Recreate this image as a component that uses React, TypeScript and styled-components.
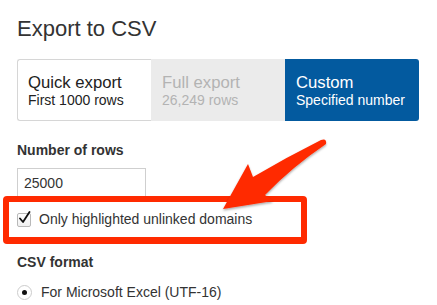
import styled, { createGlobalStyle } from 'styled-components';

const GlobalStyle = createGlobalStyle`
	body {
		margin: 0;
		background: #ffffff;
		font-family: 'Liberation Sans', Arial, sans-serif;
		color: #333333;
	}
`;

type TabVariant = 'plain' | 'disabled' | 'active';

const tabs: { title: string; sub: string; variant: TabVariant }[] = [
	{ title: 'Quick export', sub: 'First 1000 rows', variant: 'plain' },
	{ title: 'Full export', sub: '26,249 rows', variant: 'disabled' },
	{ title: 'Custom', sub: 'Specified number', variant: 'active' },
];

function App() {
	return (
		<>
			<GlobalStyle />
			<Page>
				<Title>Export to CSV</Title>
				<Tabs>
					{tabs.map((tab) => (
						<Tab key={tab.title} $variant={tab.variant}>
							<TabTitle>{tab.title}</TabTitle>
							<TabSub>{tab.sub}</TabSub>
						</Tab>
					))}
				</Tabs>

				<Label>Number of rows</Label>
				<NumberInput defaultValue='25000' />

				<Highlight>
					<CheckRow>
						<Checkbox>
							<svg width='15' height='15' viewBox='0 0 15 15'>
								<path
									d='M3 7.5 L6 11 L12.5 1'
									fill='none'
									stroke='#111'
									strokeWidth='1.8'
									strokeLinecap='round'
									strokeLinejoin='round'
								/>
							</svg>
						</Checkbox>
						Only highlighted unlinked domains
					</CheckRow>
				</Highlight>

				<Label $top={10}>CSV format</Label>
				<RadioRow>
					<Radio />
					For Microsoft Excel (UTF-16)
				</RadioRow>

				<Arrow width='437' height='305' viewBox='0 0 437 305'>
					<defs>
						<filter id='shadow' x='-20%' y='-20%' width='140%' height='140%'>
							<feDropShadow dx='0' dy='1.5' stdDeviation='1' floodColor='#000' floodOpacity='0.35' />
						</filter>
					</defs>
					<path
						d='M253 177 Q287 157 321 140 Q327 138 326 144 Q292 167 265 195 L273 201 L223 209 L248 164 Z'
						fill='#ff2a00'
						filter='url(#shadow)'
					/>
				</Arrow>
			</Page>
		</>
	);
}

const Page = styled.div`
	position: relative;
	width: 437px;
	height: 305px;
	padding: 16px 0 0 17px;
	box-sizing: border-box;
	overflow: hidden;
`;

const Title = styled.h1`
	margin: 0;
	font-size: 22px;
	line-height: 26px;
	font-weight: 400;
	color: #333;
`;

const Tabs = styled.div`
	display: flex;
	width: 402px;
	height: 62px;
	margin-top: 17px;
`;

const Tab = styled.div<{ $variant: TabVariant }>`
	flex: 1;
	box-sizing: border-box;
	background: ${(p) =>
		p.$variant === 'active' ? '#035a9f' : p.$variant === 'disabled' ? '#ebebeb' : '#ffffff'};
	color: ${(p) =>
		p.$variant === 'active' ? '#ffffff' : p.$variant === 'disabled' ? '#b3b3b3' : '#222222'};
	border: ${(p) => (p.$variant === 'plain' ? '1px solid #d6d6d6' : 'none')};
	border-right: none;
	border-radius: ${(p) =>
		p.$variant === 'plain' ? '3px 0 0 3px' : p.$variant === 'active' ? '0 3px 3px 0' : '0'};
	padding-top: ${(p) => (p.$variant === 'plain' ? '14.4px' : '15.4px')};
	padding-left: ${(p) => (p.$variant === 'plain' ? '10px' : '11px')};
`;

const TabTitle = styled.div`
	font-size: 16.7px;
	line-height: 18px;
`;

const TabSub = styled.div`
	font-size: 14px;
	line-height: 16px;
`;

const Label = styled.div<{ $top?: number }>`
	margin-top: ${(p) => (p.$top ?? 21)}px;
	font-size: 14px;
	line-height: 17px;
	font-weight: 700;
	color: #333;
`;

const NumberInput = styled.input`
	display: block;
	box-sizing: border-box;
	width: 129px;
	height: 30px;
	margin: 9px 0 0;
	padding: 0 6px;
	border: 1px solid #cfcfcf;
	border-radius: 0;
	font-family: 'Liberation Sans', Arial, sans-serif;
	font-size: 14px;
	color: #333;
	outline: none;
`;

const Highlight = styled.div`
	position: relative;
	box-sizing: border-box;
	width: 304px;
	height: 48px;
	margin: -2px 0 0 -14px;
	padding-left: 8px;
	border: 6px solid #ff2a00;
	border-bottom-width: 7px;
	border-radius: 4px;
	background: #ffffff;
	display: flex;
	align-items: center;
`;

const CheckRow = styled.label`
	display: flex;
	align-items: center;
	gap: 8px;
	font-size: 14px;
	line-height: 17px;
	color: #333;
`;

const Checkbox = styled.span`
	position: relative;
	width: 12px;
	height: 12px;
	border: 1px solid #b8b8b8;
	border-radius: 2px;
	background: linear-gradient(#ffffff, #f0f0f0);

	svg {
		position: absolute;
		left: -1px;
		top: -3px;
	}
`;

const RadioRow = styled.label`
	display: flex;
	align-items: center;
	gap: 9px;
	margin-top: 13px;
	font-size: 14px;
	line-height: 17px;
	color: #333;
`;

const Radio = styled.span`
	position: relative;
	width: 13px;
	height: 13px;
	border: 1px solid #cccccc;
	border-radius: 50%;
	background: #fff;

	&::after {
		content: '';
		position: absolute;
		left: 4px;
		top: 4px;
		width: 5px;
		height: 5px;
		border-radius: 50%;
		background: #111;
	}
`;

const Arrow = styled.svg`
	position: absolute;
	left: 0;
	top: 0;
	pointer-events: none;
`;

export default App;
